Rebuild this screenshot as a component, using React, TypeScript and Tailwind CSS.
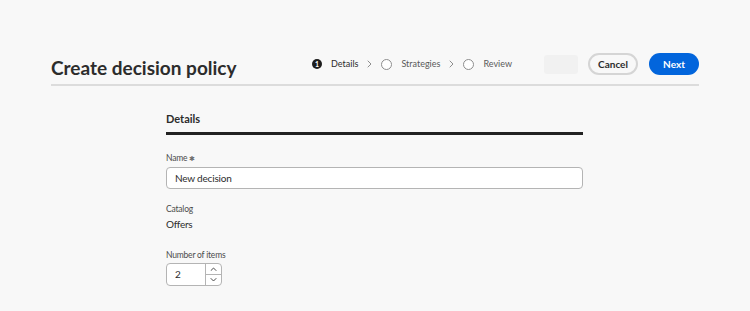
import React, { useState } from 'react';

const font = { fontFamily: 'Lato, "Open Sans", sans-serif' };

const Chevron: React.FC = () => (
  <svg width="5" height="8" viewBox="0 0 5 8" className="text-[#8e8e8e]">
    <path d="M1 1l3 3-3 3" fill="none" stroke="currentColor" strokeWidth="1" strokeLinecap="round" strokeLinejoin="round" />
  </svg>
);

const Step: React.FC<{ n: number; label: string; active?: boolean }> = ({ n, label, active }) => (
  <div className="flex items-center gap-[9px]">
    {active ? (
      <span className="w-[10px] h-[10px] rounded-full bg-[#1d1d1d] text-white text-[7px] font-bold flex items-center justify-center leading-none">
        {n}
      </span>
    ) : (
      <span className="w-[11px] h-[11px] rounded-full border border-[#8e8e8e] bg-white" />
    )}
    <span className={`text-[9px] ${active ? 'text-[#2c2c2c]' : 'text-[#5a5a5a]'}`}>{label}</span>
  </div>
);

export default function App() {
  const [name, setName] = useState('New decision');
  const [count, setCount] = useState(2);

  return (
    <div className="w-full h-[311px] bg-[#f8f8f8] overflow-hidden" style={font}>
      {/* Header */}
      <div className="mx-[51px] pt-[53px] pb-[7px] border-b-2 border-[#dcdcdc] flex items-start justify-between">
        <h1 className="text-[19px] font-bold text-[#2c2c2c] mt-[5px] leading-none">Create decision policy</h1>
        <div className="flex items-center">
          <div className="flex items-center gap-[9px]">
            <Step n={1} label="Details" active />
            <Chevron />
            <Step n={2} label="Strategies" />
            <Chevron />
            <Step n={3} label="Review" />
          </div>
          <div className="w-[34px] h-[19px] bg-[#f1f1f1] rounded-[3px] ml-[32px]" />
          <button className="ml-[10px] w-[50px] h-[22px] rounded-full border-2 border-[#d5d5d5] bg-[#f8f8f8] text-[10px] font-bold text-[#2c2c2c]">
            Cancel
          </button>
          <button className="ml-[11px] w-[50px] h-[22px] rounded-full bg-[#0265dc] text-[10px] font-bold text-white">
            Next
          </button>
        </div>
      </div>

      {/* Body */}
      <div className="ml-[166px] w-[417px] pt-[27px]">
        <h2 className="text-[11px] font-bold text-[#2c2c2c] leading-none">Details</h2>
        <div className="h-[3px] bg-[#222222] mt-[8px]" />

        <label className="block text-[8.5px] text-[#4b4b4b] mt-[19px] leading-none tracking-[-0.2px]">
          Name <span className="text-[7px] text-[#6e6e6e]">✱</span>
        </label>
        <input
          value={name}
          onChange={(e) => setName(e.target.value)}
          className="mt-[4px] w-full h-[22px] rounded-[4px] border border-[#b4b4b4] bg-white px-[8px] text-[10px] tracking-[-0.2px] text-[#2c2c2c] outline-none"
        />

        <div className="text-[8.5px] text-[#4b4b4b] mt-[16px] leading-none tracking-[-0.2px]">Catalog</div>
        <div className="text-[10px] text-[#2c2c2c] mt-[6px] leading-none tracking-[-0.3px]">Offers</div>

        <label className="block text-[8.5px] text-[#4b4b4b] mt-[22px] leading-none tracking-[-0.2px]">Number of items</label>
        <div className="mt-[3px] flex w-[56px] h-[23px] rounded-[4px] border border-[#b4b4b4] bg-white overflow-hidden">
          <input
            value={count}
            onChange={(e) => setCount(Number(e.target.value) || 0)}
            className="w-[39px] px-[8px] text-[10px] text-[#2c2c2c] outline-none border-r border-[#b4b4b4]"
          />
          <div className="flex flex-col flex-1">
            <button onClick={() => setCount(count + 1)} className="flex-1 flex items-center justify-center border-b border-[#b4b4b4]">
              <svg width="7" height="4" viewBox="0 0 7 4"><path d="M1 3.5l2.5-2.5 2.5 2.5" fill="none" stroke="#4b4b4b" strokeWidth="1" strokeLinecap="round" /></svg>
            </button>
            <button onClick={() => setCount(Math.max(0, count - 1))} className="flex-1 flex items-center justify-center">
              <svg width="7" height="4" viewBox="0 0 7 4"><path d="M1 0.5l2.5 2.5 2.5-2.5" fill="none" stroke="#4b4b4b" strokeWidth="1" strokeLinecap="round" /></svg>
            </button>
          </div>
        </div>
      </div>
    </div>
  );
}
